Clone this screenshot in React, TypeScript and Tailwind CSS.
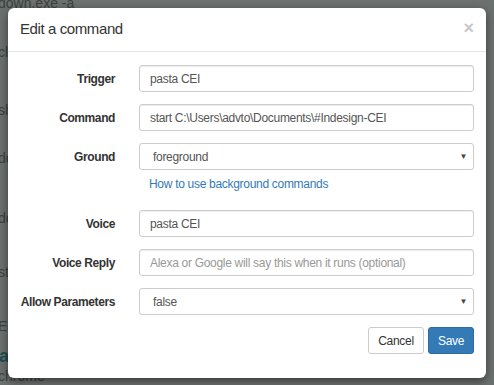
const font = { fontFamily: '"Liberation Sans", Arial, sans-serif' }

function Field({ label, children }: { label: string; children: React.ReactNode }) {
  return (
    <div className="flex items-center">
      <label className="w-[95px] shrink-0 whitespace-nowrap text-right text-[12px] font-bold tracking-[-0.4px] text-[#333]">
        {label}
      </label>
      <div className="ml-[24px] flex-1">{children}</div>
    </div>
  )
}

function TextInput({ value, placeholder }: { value?: string; placeholder?: string }) {
  return (
    <div className="flex h-[27px] items-center rounded-[3px] border border-[#ccc] bg-white px-[10px] text-[12px] tracking-[-0.3px] shadow-[inset_0_1px_1px_rgba(0,0,0,0.075)]">
      {value ? (
        <span className="text-[#555]">{value}</span>
      ) : (
        <span className="text-[#999]">{placeholder}</span>
      )}
    </div>
  )
}

function SelectBox({ value }: { value: string }) {
  return (
    <div className="flex h-[27px] items-center justify-between rounded-[3px] border border-[#ccc] bg-white pl-[13px] pr-[6px] text-[12px] tracking-[-0.3px] text-[#555]">
      <span>{value}</span>
      <span className="text-[8px] leading-none text-[#444]">▼</span>
    </div>
  )
}

export default function App() {
  const rows = [
    { t: "down.exe -a", mt: "mt-[-5px]" },
    { t: "click", mt: "mt-[33px]" },
    { t: "shutdown", mt: "mt-[42px]" },
    { t: "dock", mt: "mt-[32px]" },
    { t: "dock", mt: "mt-[44px]" },
    { t: "start", mt: "mt-[38px]" },
    { t: "Edge", mt: "mt-[38px]" },
  ]
  return (
    <div className="relative h-[385px] w-[494px] overflow-hidden bg-[#6c7170]" style={font}>
      {/* page behind the dialog */}
      <div className="flex flex-col text-[14px] text-[#3c403f]">
        {rows.map((r, i) => (
          <div key={i} className={`${r.mt} ml-[-2px] leading-[16px]`}>
            {r.t}
          </div>
        ))}
        <div className="mt-[12px] ml-[-1px] text-[18px] font-bold leading-[20px] text-[#1e4e50]">alexa</div>
        <div className="mt-[2px] ml-[-2px] text-[14px] leading-[16px]">chrome</div>
      </div>

      {/* dialog */}
      <div className="absolute inset-0 pl-[8px] pt-[8px]">
        <div className="h-[370px] w-[478px] rounded-[6px] bg-white shadow-[0_3px_9px_rgba(0,0,0,0.5)]">
          <div className="flex h-[44px] items-center justify-between border-b border-[#e5e5e5] px-[12px]">
            <h4 className="text-[15px] tracking-[-0.4px] text-[#333]">Edit a command</h4>
            <span className="mb-[4px] text-[18px] font-bold leading-none text-[#c8c8c8]">×</span>
          </div>
          <div className="flex flex-col gap-[12px] px-[12px] pt-[13px]">
            <Field label="Trigger">
              <TextInput value="pasta CEI" />
            </Field>
            <Field label="Command">
              <TextInput value="start C:\Users\advto\Documents\#Indesign-CEI" />
            </Field>
            <div className="flex flex-col">
              <Field label="Ground">
                <SelectBox value="foreground" />
              </Field>
              <div className="ml-[129px] mt-[6px] mb-[6px] text-[12px] leading-[16px] tracking-[-0.3px] text-[#337ab7]">
                How to use background commands
              </div>
            </div>
            <Field label="Voice">
              <TextInput value="pasta CEI" />
            </Field>
            <Field label="Voice Reply">
              <TextInput placeholder="Alexa or Google will say this when it runs (optional)" />
            </Field>
            <Field label="Allow Parameters">
              <SelectBox value="false" />
            </Field>
            <div className="flex justify-end gap-[4px]">
              <button className="h-[27px] w-[56px] rounded-[3px] border border-[#ccc] bg-white text-[12px] tracking-[-0.3px] text-[#333]">
                Cancel
              </button>
              <button className="h-[27px] w-[46px] rounded-[3px] border border-[#2e6da4] bg-[#337ab7] text-[12px] tracking-[-0.3px] text-white">
                Save
              </button>
            </div>
          </div>
        </div>
      </div>
    </div>
  )
}
